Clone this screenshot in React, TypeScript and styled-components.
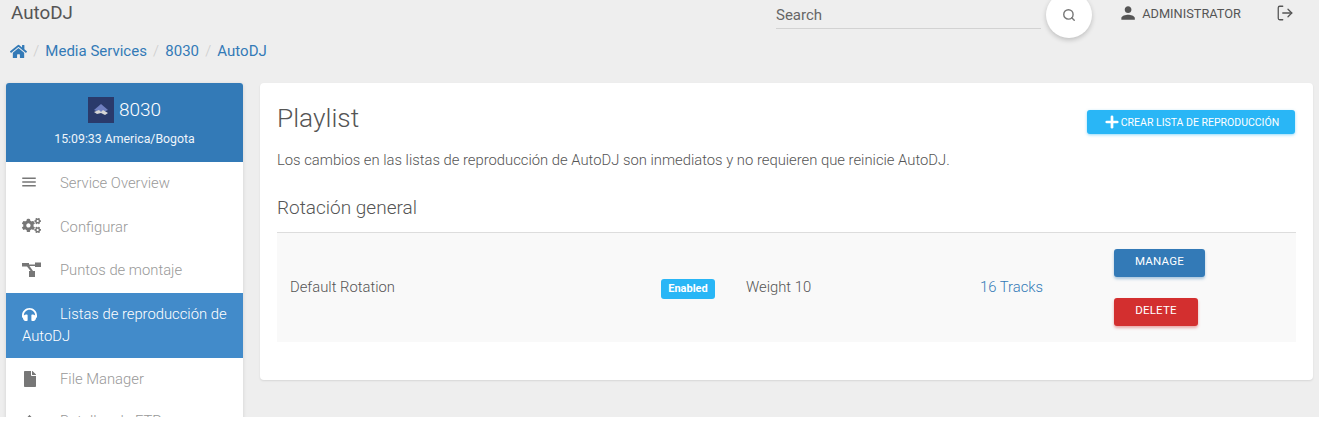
import styled, { createGlobalStyle } from "styled-components";
import { Search, LogOut, Upload, Plus } from "lucide-react";
import { FaCogs, FaHome, FaFile, FaHeadphones } from "react-icons/fa";
import { MdPerson, MdMenu } from "react-icons/md";

const GlobalStyle = createGlobalStyle`
	html, body {
		margin: 0;
		padding: 0;
		height: 421px;
		overflow: hidden;
		background: #ffffff;
		font-family: Roboto, "Liberation Sans", sans-serif;
		font-weight: 300;
		color: #555555;
	}
`;

const Page = styled.div`
	width: 1319px;
	height: 417px;
	overflow: hidden;
	background: #eeeeee;
`;

const Navbar = styled.header`
	height: 29px;
	display: flex;
	align-items: center;
	padding: 0 25px 0 11px;
`;

const Brand = styled.div`
	flex: 1;
	font-size: 18.8px;
	font-weight: 400;
	color: #555555;
	margin-top: -3px;
`;

const SearchBox = styled.div`
	width: 265px;
	height: 28px;
	margin-right: 5px;
	box-sizing: border-box;
	border-bottom: 1px solid #d2d2d2;
	font-size: 15px;
	font-weight: 400;
	color: #666666;
	display: flex;
	align-items: center;
	padding-top: 1px;
`;

const SearchButton = styled.div`
	width: 46px;
	height: 46px;
	flex-shrink: 0;
	border-radius: 50%;
	background: #ffffff;
	box-shadow: 0 2px 5px rgba(0, 0, 0, 0.2);
	display: flex;
	align-items: center;
	justify-content: center;
	color: #777777;
`;

const UserArea = styled.div`
	display: flex;
	align-items: center;
	margin-left: 26px;
	font-size: 12.8px;
	font-weight: 400;
	color: #555555;
	gap: 4px;
	width: 123px;
	white-space: nowrap;
	margin-top: -3px;
`;

const LogoutIcon = styled.div`
	display: flex;
	color: #555555;
	margin-top: -4px;
	margin-left: 35px;
`;

const Crumbs = styled.nav`
	height: 44px;
	display: flex;
	align-items: center;
	padding-left: 10px;
	font-size: 15px;
	font-weight: 400;
	color: #337ab7;
	margin-bottom: 10px;
`;

const CrumbSep = styled.span`
	color: #cccccc;
	padding: 0 6.2px;
	font-weight: 300;
`;

const Columns = styled.div`
	display: flex;
	align-items: flex-start;
	padding: 0 6px 0 6px;
	gap: 17px;
`;

const Sidebar = styled.aside`
	width: 237px;
	flex-shrink: 0;
	background: #ffffff;
	border-radius: 3px 3px 0 0;
	box-shadow: 0 1px 4px rgba(0, 0, 0, 0.12);
`;

const SideHeader = styled.div`
	height: 79px;
	background: #337ab7;
	border-radius: 3px 3px 0 0;
	color: #ffffff;
	display: flex;
	flex-direction: column;
	align-items: center;
	padding-top: 14px;
	box-sizing: border-box;
`;

const ServiceTitle = styled.div`
	display: flex;
	align-items: center;
	gap: 5px;
	font-size: 19px;
	line-height: 26px;
`;

const ServiceLogo = styled.svg`
	width: 26px;
	height: 26px;
	display: block;
`;

const ServiceClock = styled.div`
	font-size: 12.3px;
	font-weight: 400;
	margin-top: 9px;
	color: #eef4fa;
`;

const SideList = styled.ul`
	list-style: none;
	margin: 0;
	padding: 0;
`;

const SideItem = styled.li<{ $active?: boolean }>`
	padding: ${(p) => (p.$active ? "10px 12px 11px 16px" : "10px 12px 11.67px 16px")};
	font-size: 14.8px;
	line-height: 22px;
	color: ${(p) => (p.$active ? "#ffffff" : "#999999")};
	background: ${(p) => (p.$active ? "#428bca" : "transparent")};
`;

const ClippedItem = styled(SideItem)`
	margin-top: -1.5px;
`;

const SideIcon = styled.span<{ $active?: boolean }>`
	display: inline-flex;
	width: 38px;
	vertical-align: -3px;
	color: ${(p) => (p.$active ? "#ffffff" : "#777777")};
`;

const MountIcon = styled.svg`
	width: 19px;
	height: 16px;
	display: block;
`;

const Card = styled.main`
	flex: 1;
	height: 297px;
	box-sizing: border-box;
	background: #ffffff;
	border-radius: 4px;
	box-shadow: 0 1px 2px rgba(0, 0, 0, 0.1);
	padding: 16px 17px 0 17px;
`;

const CardTop = styled.div`
	display: flex;
	justify-content: space-between;
	align-items: flex-start;
`;

const Title = styled.h1`
	margin: 0;
	font-size: 26.3px;
	font-weight: 300;
	line-height: 38px;
	color: #555555;
`;

const CreateButton = styled.button`
	margin: 11px 1px 0 0;
	width: 208px;
	height: 24px;
	border: 0;
	border-radius: 3px;
	background: #29b6f6;
	color: #ffffff;
	font-family: inherit;
	font-size: 10.5px;
	font-weight: 400;
	text-transform: uppercase;
	box-shadow: 0 1px 3px rgba(41, 182, 246, 0.5);
	display: flex;
	align-items: center;
	justify-content: center;
	padding: 0;
	white-space: nowrap;
`;

const Lead = styled.p`
	margin: 13px 0 0;
	font-size: 14.8px;
	line-height: 20px;
	color: #555555;
`;

const Subtitle = styled.h2`
	margin: 25px 0 0;
	font-size: 19px;
	font-weight: 300;
	line-height: 26px;
	color: #555555;
`;

const Row = styled.div`
	margin-top: 11px;
	height: 109px;
	background: #f9f9f9;
	border-top: 1px solid #dddddd;
	display: flex;
	align-items: center;
	font-size: 14.8px;
	color: #555555;
`;

const NameCell = styled.div`
	width: 384px;
	padding-left: 13px;
	box-sizing: border-box;
	margin-top: -2px;
`;

const Badge = styled.span`
	width: 54px;
	height: 20px;
	background: #29b6f6;
	border-radius: 3px;
	color: #ffffff;
	font-size: 11px;
	font-weight: 700;
	display: flex;
	align-items: center;
	justify-content: center;
	margin-top: 2px;
`;

const WeightCell = styled.div`
	margin-left: 31px;
	width: 234px;
	margin-top: -2px;
`;

const TracksCell = styled.a`
	width: 134px;
	color: #337ab7;
	margin-top: -2px;
`;

const Actions = styled.div`
	display: flex;
	flex-direction: column;
	align-items: flex-start;
	gap: 21px;
`;

const ActionButton = styled.button<{ $color: string; $w: number }>`
	width: ${(p) => p.$w}px;
	height: 28px;
	border: 0;
	border-radius: 3px;
	background: ${(p) => p.$color};
	color: #ffffff;
	font-family: inherit;
	font-size: 11.5px;
	font-weight: 400;
	letter-spacing: 0.2px;
	padding: 0 0 4px;
	box-shadow: 0 2px 3px ${(p) => p.$color}66;
`;

export default function App() {
	return (
		<Page>
			<GlobalStyle />
			<Navbar>
				<Brand>AutoDJ</Brand>
				<SearchBox>Search</SearchBox>
				<SearchButton>
					<Search size={14} strokeWidth={2.4} />
				</SearchButton>
				<UserArea>
					<MdPerson size={22} />
					ADMINISTRATOR
				</UserArea>
				<LogoutIcon>
					<LogOut size={18} strokeWidth={1.7} />
				</LogoutIcon>
			</Navbar>
			<Crumbs>
				<FaHome size={17} />
				<CrumbSep>/</CrumbSep>
				Media Services
				<CrumbSep>/</CrumbSep>
				8030
				<CrumbSep>/</CrumbSep>
				AutoDJ
			</Crumbs>
			<Columns>
				<Sidebar>
					<SideHeader>
						<ServiceTitle>
							<ServiceLogo viewBox="0 0 26 26">
								<rect width="26" height="26" fill="#2a3a6b" />
								<path d="M13 7l7 6-7 3-7-3z" fill="#6f7fc0" />
								<path d="M6 15l5-2 2 2 2-2 5 3-3 2-4-2-4 1z" fill="#d6d6d6" />
							</ServiceLogo>
							8030
						</ServiceTitle>
						<ServiceClock>15:09:33 America/Bogota</ServiceClock>
					</SideHeader>
					<SideList>
						<SideItem>
							<SideIcon><MdMenu size={18} style={{ marginLeft: -2 }} /></SideIcon>Service Overview
						</SideItem>
						<SideItem>
							<SideIcon><FaCogs size={19} /></SideIcon>Configurar
						</SideItem>
						<SideItem>
							<SideIcon>
								<MountIcon viewBox="0 0 19 16" fill="currentColor">
									<path d="M0 1h7v1.5h6V4H7.5l3.5 5H8.6L5 4.5H0z" />
									<rect x="13" y="0.5" width="6" height="4.5" />
									<rect x="7" y="9" width="6" height="6" />
								</MountIcon>
							</SideIcon>
							Puntos de montaje
						</SideItem>
						<SideItem $active>
							<SideIcon $active><FaHeadphones size={15} /></SideIcon>Listas de reproducción de AutoDJ
						</SideItem>
						<SideItem>
							<SideIcon><FaFile size={16} /></SideIcon>File Manager
						</SideItem>
						<ClippedItem>
							<SideIcon><Upload size={15} /></SideIcon>Detalles de FTP
						</ClippedItem>
					</SideList>
				</Sidebar>
				<Card>
					<CardTop>
						<Title>Playlist</Title>
						<CreateButton>
							<Plus size={18} strokeWidth={3.6} />
							Crear lista de reproducción
						</CreateButton>
					</CardTop>
					<Lead>Los cambios en las listas de reproducción de AutoDJ son inmediatos y no requieren que reinicie AutoDJ.</Lead>
					<Subtitle>Rotación general</Subtitle>
					<Row>
						<NameCell>Default Rotation</NameCell>
						<Badge>Enabled</Badge>
						<WeightCell>Weight 10</WeightCell>
						<TracksCell>16 Tracks</TracksCell>
						<Actions>
							<ActionButton $color="#337ab7" $w={91}>MANAGE</ActionButton>
							<ActionButton $color="#d32f2f" $w={84}>DELETE</ActionButton>
						</Actions>
					</Row>
				</Card>
			</Columns>
		</Page>
	);
}
